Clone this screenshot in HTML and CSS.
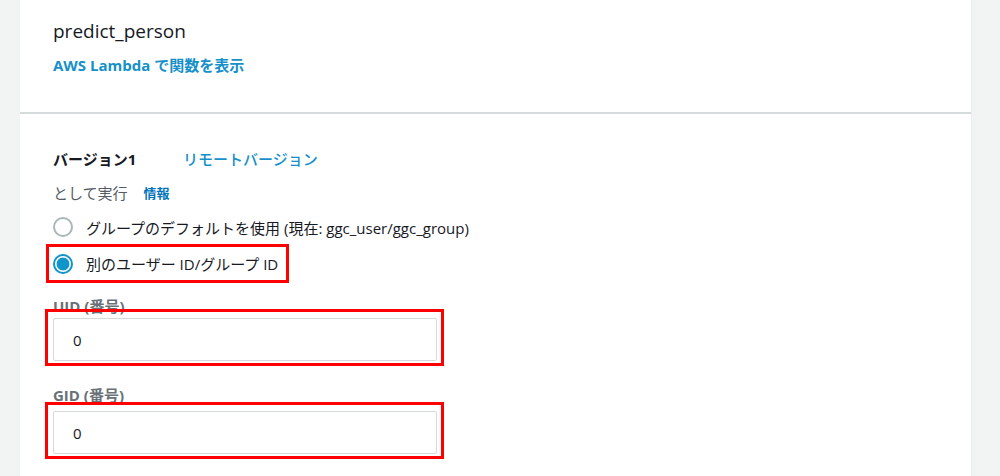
FILE: index.html
```html
<!DOCTYPE html>
<html lang="ja">
<head>
<meta charset="utf-8">
<title>predict_person</title>
<link rel="stylesheet" href="styles.css">
</head>
<body>
<div class="page">
  <div class="gutter-left"></div>
  <main class="main">
    <section class="card card-top">
      <h1 class="title">predict_person</h1>
      <a class="link strong" href="#">AWS Lambda で関数を表示</a>
    </section>
    <section class="card card-form">
      <div class="version-row">
        <span class="version">バージョン1</span>
        <a class="link remote" href="#">リモートバージョン</a>
      </div>
      <div class="runas">
        <span class="runas-label">として実行</span>
        <a class="info" href="#">情報</a>
      </div>
      <label class="radio-row">
        <span class="radio"></span>
        <span class="radio-text">グループのデフォルトを使用 (現在: ggc_user/ggc_group)</span>
      </label>
      <div class="mark mark-radio">
        <label class="radio-row inner">
          <span class="radio checked"></span>
          <span class="radio-text">別のユーザー ID/グループ ID</span>
        </label>
      </div>
      <div class="field field-uid">
        <div class="field-label">UID (番号)</div>
        <div class="mark mark-input">
          <div class="input">0</div>
        </div>
      </div>
      <div class="field field-gid">
        <div class="field-label">GID (番号)</div>
        <div class="mark mark-input">
          <div class="input">0</div>
        </div>
      </div>
    </section>
  </main>
  <div class="gutter-right"></div>
</div>
</body>
</html>
```

FILE: styles.css
```css
html, body {
  margin: 0;
  padding: 0;
  height: 100%;
  overflow: hidden;
}
body {
  background: #f2f3f3;
  font-family: "Open Sans", "Noto Sans CJK JP", sans-serif;
  color: #16191f;
  font-size: 15px;
}
.page {
  display: flex;
  height: 476px;
}
.gutter-left {
  width: 20px;
  flex: none;
}
.gutter-right {
  width: 28px;
  flex: none;
}
.main {
  width: 952px;
  flex: none;
  display: flex;
  flex-direction: column;
  border-right: 1px solid #eaeded;
  box-sizing: border-box;
}
.card {
  background: #fff;
  padding-left: 33px;
}
.card-top {
  height: 114px;
  box-sizing: border-box;
  padding-top: 20px;
  border-bottom: 2px solid #d5dbdb;
  display: flex;
  flex-direction: column;
  align-items: flex-start;
}
.title {
  margin: 0;
  font-weight: 400;
  font-size: 19px;
  line-height: 22px;
  color: #16191f;
  font-family: "Open Sans", "Noto Sans CJK JP", sans-serif;
}
.link {
  color: #1590c8;
  text-decoration: none;
}
.strong {
  font-weight: 700;
  font-size: 15px;
  line-height: 22px;
  margin-top: 12px;
}
.card-form {
  flex: 1;
  padding-top: 34px;
  display: flex;
  flex-direction: column;
  align-items: flex-start;
}
.version-row {
  display: flex;
  align-items: center;
  line-height: 22px;
}
.version {
  font-weight: 700;
  width: 130px;
}
.remote {
  font-weight: 500;
}
.runas {
  margin-top: 12px;
  display: flex;
  align-items: center;
  line-height: 22px;
}
.runas-label {
  color: #545b64;
}
.info {
  margin-left: 16px;
  color: #0073bb;
  font-weight: 700;
  font-size: 13px;
  text-decoration: none;
}
.radio-row {
  display: flex;
  align-items: center;
  height: 36px;
  margin-top: 5px;
  gap: 13px;
}
.radio-row.inner {
  margin-top: 0;
  height: 33px;
  width: 237px;
  padding-left: 4px;
  box-sizing: border-box;
}
.radio {
  width: 16px;
  height: 16px;
  border: 2px solid #aab7b8;
  border-radius: 50%;
  flex: none;
  background: #fff;
}
.radio.checked {
  border-color: #0f95cb;
  background: radial-gradient(circle, #0f95cb 0, #0f95cb 6px, #fff 6.8px);
}
.mark {
  border: 3px solid #ff0000;
}
.mark-radio {
  margin-left: -7px;
  margin-top: -1px;
}
.field {
  display: flex;
  flex-direction: column;
  align-items: flex-start;
}
.field-uid {
  margin-top: 14px;
}
.field-gid {
  margin-top: 20px;
}
.field-label {
  color: #687078;
  font-weight: 700;
  line-height: 18px;
}
.mark-input {
  margin-left: -8px;
  margin-top: -6px;
  padding: 6px 4px 2px 5px;
  width: 384px;
  position: relative;
  z-index: 1;
}
.field-gid .mark-input {
  margin-top: -2px;
}
.input {
  border: 1px solid #d5dbdb;
  border-radius: 2px;
  box-sizing: border-box;
  height: 43px;
  padding-left: 19px;
  display: flex;
  align-items: center;
  color: #16191f;
  background: #fff;
}
```
